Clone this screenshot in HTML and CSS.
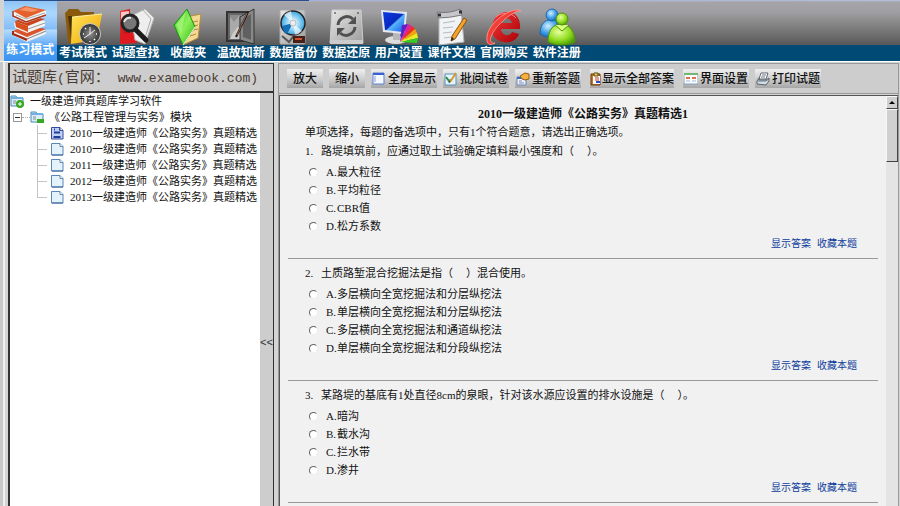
FILE: index.html
```html
<!DOCTYPE html>
<html lang="zh-CN">
<head>
<meta charset="utf-8">
<title>一级建造师真题库学习软件</title>
<link rel="stylesheet" href="styles.css">
</head>
<body>
<svg class="defs" aria-hidden="true">
  <defs>
    <linearGradient id="folder" x1="0" y1="0" x2="1" y2="1"><stop offset="0" stop-color="#ffe45a"/><stop offset="1" stop-color="#f0a400"/></linearGradient>
    <linearGradient id="red" x1="0" y1="0" x2="1" y2="1"><stop offset="0" stop-color="#f43a38"/><stop offset="1" stop-color="#a80008"/></linearGradient>
    <linearGradient id="green" x1="0" y1="0" x2="1" y2="1"><stop offset="0" stop-color="#30c818"/><stop offset=".5" stop-color="#8cf05a"/><stop offset="1" stop-color="#28b010"/></linearGradient>
    <linearGradient id="silver" x1="0" y1="0" x2="1" y2="1"><stop offset="0" stop-color="#e8e8e8"/><stop offset="1" stop-color="#9c9c9c"/></linearGradient>
    <linearGradient id="screen" x1="0" y1="0" x2="1" y2="1"><stop offset="0" stop-color="#0a3ce0"/><stop offset=".5" stop-color="#0a28c0"/><stop offset=".55" stop-color="#58b4ff"/><stop offset="1" stop-color="#1058e0"/></linearGradient>
    <radialGradient id="disc"><stop offset="0" stop-color="#fff"/><stop offset=".25" stop-color="#d0f0ff"/><stop offset="1" stop-color="#38a4e0"/></radialGradient>
    <radialGradient id="lime" cx=".4" cy=".35" r=".7"><stop offset="0" stop-color="#eaffa0"/><stop offset=".6" stop-color="#90dc20"/><stop offset="1" stop-color="#4c9a08"/></radialGradient>
    <radialGradient id="sky" cx=".4" cy=".35" r=".7"><stop offset="0" stop-color="#d0f0ff"/><stop offset=".6" stop-color="#3c9ce8"/><stop offset="1" stop-color="#1460b0"/></radialGradient>
    <radialGradient id="clock"><stop offset="0" stop-color="#909090"/><stop offset="1" stop-color="#303030"/></radialGradient>
    <symbol id="doc" viewBox="0 0 14 14"><path d="M1.500 1.500h8.500l3 3v8.500h-11.500z" fill="#e4f2fc" stroke="#5a86b8"/><path d="M10 1.500v3h3" fill="#fff" stroke="#5a86b8"/><path d="M2 13h11" stroke="#37649c"/></symbol>
    <symbol id="doc-open" viewBox="0 0 14 14"><path d="M1.500 1.500h8.500l3 3v8.500h-11.500z" fill="#c0d0f4" stroke="#344c9c"/><path d="M10 1.500v3h3" fill="#fff" stroke="#344c9c"/><path d="M4 3.500h1M9 3.500h1M4 6.500h6M3.500 11h7" stroke="#243c98" stroke-width="2"/></symbol>
  </defs>
</svg>

<header class="topbar">
  <nav class="modes" aria-label="主功能">
    <button class="mode active" type="button">
      <svg viewBox="0 0 40 38"><path d="M3 27l13-6 20 4v4l-19 8L4 31z" fill="#eee"/><path d="M3 26l13-6 20 4-19 8z" fill="#d9532c"/><path d="M4 29l13 5 19-8" stroke="#888" fill="none"/><path d="M3 26v3l14 6" stroke="#a52a10" stroke-width="2" fill="none"/><path d="M4 18l13-5 18 3v5l-18 7L5 23z" fill="#f4f4f4"/><path d="M5 16l13-5 17 3-17 7z" fill="#c9441c"/><path d="M6 20l12 4 17-6" stroke="#999" fill="none"/><path d="M5 16l13 5v6L6 22z" fill="#d8501e"/><path d="M3 7l12-5 21 4v5l-20 7-12-5z" fill="#f6f6f6"/><path d="M3 6l12-5 21 4-20 8z" fill="#e4602c"/><path d="M9 5l7-3 13 3-7 2z" fill="#f49468"/><path d="M3 6v5l13 6 20-7" stroke="#a8381c" fill="none" stroke-width="1.500"/><path d="M6 10l10 4 19-6" stroke="#aaa" fill="none"/></svg>
      <span>练习模式</span>
    </button>
    <button class="mode" type="button">
      <svg viewBox="0 0 40 38"><path d="M2 5l4-4h9l3 3h13v5L8 35 5 34z" fill="#8a5a0c"/><path d="M5 8h23v7L8 30z" fill="#4a3208"/><path d="M9 9l30-3-5 26-26 4z" fill="url(#folder)"/><path d="M9 9l30-3" stroke="#fff0a0"/><circle cx="27" cy="26" r="10.500" fill="url(#clock)" stroke="#ccc"/><path d="M27 19v7l5-4M27 26l-6 4" stroke="#eee" fill="none"/><path d="M20 26h1M33 26h1M27 34v-1M22 20l1 1M31 31l1 1" stroke="#fff" stroke-width="1.500"/></svg>
      <span>考试模式</span>
    </button>
    <button class="mode" type="button">
      <svg viewBox="0 0 40 38"><path d="M4 3l10-2v33l-10 1z" fill="url(#red)"/><path d="M6 26l13-2 2 11-17 1z" fill="#e01820"/><path d="M15 8l14-7 9 9-9 26-10-4z" fill="#eee" stroke="#b8b8b8"/><path d="M27 2l8 9-7 22" stroke="#aaa" fill="none"/><path d="M5 4l8-1v8l-8 5z" fill="#f8c8c8"/><circle cx="14" cy="15" r="8" fill="#777" stroke="#242424" stroke-width="3"/><path d="M8 14q2-5 7-4" stroke="#e8e8e8" stroke-width="2" fill="none"/><path d="M20 22l10 10" stroke="#1c1c1c" stroke-width="5" stroke-linecap="round"/></svg>
      <span>试题查找</span>
    </button>
    <button class="mode" type="button">
      <svg viewBox="0 0 40 38"><path d="M18 9l15-3-3 24-15 7z" fill="#f4d894" stroke="#b88c3c"/><path d="M25 14l5-1M25 18l5-1M25 22l5-1M22 28l6-2" stroke="#b8863c"/><path d="M19 1l8 18-12 18L6 17z" fill="url(#green)" stroke="#189410"/><path d="M18 3L8 17l5 8z" fill="#b8f890" opacity=".6"/><path d="M27 19L15 37" stroke="#f0ffe0"/></svg>
      <span>收藏夹</span>
    </button>
    <button class="mode" type="button">
      <svg viewBox="0 0 40 38"><path d="M6 4h22v29H6z" fill="#666" stroke="#333" stroke-width="2"/><path d="M9 7h12v24H9z" fill="#8c8c8c"/><path d="M9 31l6-15 6 7v8z" fill="#ccc"/><path d="M9 9l4 5 5-6v9l-9 12z" fill="#aaa"/><path d="M19 9L33 1v35l-14-4z" fill="#888" stroke="#333"/><path d="M22 11l8-5v26l-8-3z" fill="#606060"/><path d="M27 4L15 29" stroke="#241410" stroke-width="2"/><path d="M26 5L16 27" stroke="#b48474" stroke-width=".8"/></svg>
      <span>温故知新</span>
    </button>
    <button class="mode" type="button">
      <svg viewBox="0 0 40 38"><rect x="7" y="2" width="25" height="34" rx="1" fill="url(#silver)" stroke="#aaa"/><circle cx="20" cy="15" r="12" fill="url(#disc)" stroke="#222" stroke-width="1.500"/><path d="M20 15L11 7a12 12 0 0 1 7-4zM20 15l9 8a12 12 0 0 1-7 4z" fill="#fff" opacity=".65"/><path d="M20 15l-11 3a12 12 0 0 0 5 8z" fill="#1270b8"/><circle cx="20" cy="15" r="3" fill="#eee" stroke="#bbb"/><path d="M9 28l7 6 6-8" stroke="#555" stroke-width="2" fill="none"/><rect x="20" y="28" width="12" height="7" fill="#462018"/><path d="M22 31h7" stroke="#c8542c" stroke-width="2"/></svg>
      <span>数据备份</span>
    </button>
    <button class="mode" type="button">
      <svg viewBox="0 0 40 38"><path d="M6 2h29l2 33H4z" fill="url(#silver)" stroke="#ccc"/><circle cx="9" cy="5" r="1" fill="#666"/><circle cx="32" cy="5" r="1" fill="#666"/><path d="M4 32h33v4H4z" fill="#ccc"/><path d="M12 17a9 9 0 0 1 15-6M29 19a9 9 0 0 1-15 6" stroke="#505050" stroke-width="3" fill="none"/><path d="M30 8v8h-8zM11 28v-8h8z" fill="#505050"/></svg>
      <span>数据还原</span>
    </button>
    <button class="mode" type="button">
      <svg viewBox="0 0 40 38"><ellipse cx="17" cy="32" rx="11" ry="4" fill="#ddd"/><path d="M14 24h7v8h-7z" fill="#b8b8b8"/><path d="M2 2l26 2-2 22L4 24z" fill="#e4e8f0"/><path d="M4 4l22 2-2 18-18-2z" fill="url(#screen)"/><path d="M21 34l2-17 6-1z" fill="#6020c8"/><path d="M21 34l8-18 4 2z" fill="#e020a0"/><path d="M21 34L33 18l3 3z" fill="#f03020"/><path d="M21 34l15-13 2 4z" fill="#f8a010"/><path d="M21 34l17-9 1 5z" fill="#e8ec20"/><path d="M21 34l18-4-1 5z" fill="#38c828"/></svg>
      <span>用户设置</span>
    </button>
    <button class="mode" type="button">
      <svg viewBox="0 0 40 38"><path d="M8 6l22-3 3 31-25 3z" fill="#f0f2f4" stroke="#b0b4b8"/><path d="M6 4q12 2 23-3l2 6Q18 10 7 10z" fill="#c8c8cc" stroke="#777"/><path d="M7 7h3M28 4h3" stroke="#333" stroke-width="3"/><path d="M12 15l12-2M12 20l10-1M12 25l9-1M13 30l8-1" stroke="#b4bcc4"/><path d="M33 10l3 2-12 19-4 2 1-5z" fill="#f0a428" stroke="#905010"/><path d="M20 33l1-4 2 2z" fill="#222"/></svg>
      <span>课件文档</span>
    </button>
    <button class="mode" type="button">
      <svg viewBox="0 0 40 38"><path d="M35 26c-3 7-9 9-15 8C11 33 7 27 8 19 9 10 15 4 23 4c9 0 14 7 13 17H17c1 7 8 8 11 3z" fill="url(#red)"/><path d="M17 15h11c-1-6-10-6-11 0z" fill="#777"/><path d="M12 9c5-5 15-5 20 1" stroke="#ff8a80" fill="none"/><path d="M37 3C28-2 5 14 3 28c-1 9 3 10 8 7-8 1-4-9 2-16C22 9 32 2 37 3z" fill="#f04038" stroke="#ffa098" stroke-width=".8"/></svg>
      <span>官网购买</span>
    </button>
    <button class="mode" type="button">
      <svg viewBox="0 0 40 38"><path d="M3 26c0-9 4-13 8-14h8l4 16c-6 2-14 2-20-2z" fill="url(#sky)" stroke="#1c68a8"/><circle cx="15" cy="7" r="6" fill="url(#sky)" stroke="#1c68a8"/><path d="M11 34c0-11 4-16 9-17h9c5 2 9 8 9 17-7 4-20 4-27 0z" fill="url(#lime)" stroke="#509408"/><path d="M18 17l7 6 7-6" fill="#d8ff80" stroke="#509408"/><circle cx="25" cy="11" r="6" fill="url(#lime)" stroke="#509408"/></svg>
      <span>软件注册</span>
    </button>
  </nav>
</header>

<div class="workspace">
  <aside class="sidebar">
    <h1 class="site">试题库<span class="latin">(</span>官网：<span class="latin"> www.examebook.com)</span></h1>
    <div class="side-body">
      <div class="tree">
        <div class="node root">
          <svg class="node-icon" viewBox="0 0 14 14"><path d="M1 2h5l1 2h6v8H1z" fill="#dceefc" stroke="#4888b8"/><path d="M1 4h12" stroke="#70b0e0" stroke-width="2"/><path d="M3 7h3M3 9h3" stroke="#888"/><circle cx="10" cy="10" r="4" fill="#38a820"/><path d="M10 8v4M8 10h4" stroke="#fff"/></svg>
          <span>一级建造师真题库学习软件</span>
        </div>
        <div class="node module">
          <button class="toggle" type="button" aria-label="折叠"></button><i class="dash"></i>
          <svg class="node-icon" viewBox="0 0 14 14"><path d="M1 2h5l1 2h6v8H1z" fill="#dceefc" stroke="#4888b8"/><path d="M1 4h12" stroke="#70b0e0" stroke-width="2"/><path d="M3 7h3M3 9h3" stroke="#888"/><path d="M7 9h7v4H7z" fill="#38a820"/></svg>
          <span>《公路工程管理与实务》模块</span>
        </div>
        <ul class="leaves">
          <li class="node"><svg class="node-icon"><use href="#doc-open"/></svg><span>2010一级建造师《公路实务》真题精选</span></li>
          <li class="node"><svg class="node-icon"><use href="#doc"/></svg><span>2010一级建造师《公路实务》真题精选</span></li>
          <li class="node"><svg class="node-icon"><use href="#doc"/></svg><span>2011一级建造师《公路实务》真题精选</span></li>
          <li class="node"><svg class="node-icon"><use href="#doc"/></svg><span>2012一级建造师《公路实务》真题精选</span></li>
          <li class="node"><svg class="node-icon"><use href="#doc"/></svg><span>2013一级建造师《公路实务》真题精选</span></li>
        </ul>
      </div>
      <button class="collapse" type="button">&lt;&lt;</button>
    </div>
  </aside>

  <main class="main">
    <div class="toolbar">
      <button class="tool" type="button">放大</button>
      <button class="tool" type="button">缩小</button>
      <button class="tool with-icon" type="button"><svg viewBox="0 0 14 14"><path d="M1 1h11v11H1z" fill="#f4f8ff" stroke="#6080d0"/><path d="M1 2h11" stroke="#3c60d0" stroke-width="2"/><path d="M2 5h2M2 7h2M2 9h2" stroke="#88a0e0"/></svg>全屏显示</button>
      <button class="tool with-icon" type="button"><svg viewBox="0 0 14 14"><path d="M1 2h11v11H1z" fill="#e4f4fc" stroke="#5890b8"/><path d="M2 5l3 4 2-1" stroke="#308850" stroke-width="2" fill="none"/><path d="M12 1L6 10" stroke="#d89828" stroke-width="2"/><path d="M6 9l-1 2" stroke="#333"/></svg>批阅试卷</button>
      <button class="tool with-icon" type="button"><svg viewBox="0 0 14 14"><path d="M1 5h9v8H1z" fill="#eef4ff" stroke="#6888b8"/><path d="M1 6h9" stroke="#3c70c8" stroke-width="2"/><path d="M4 4l5-3 4 1v5l-4 1-3-1z" fill="#f4b040" stroke="#985c10"/><path d="M3 9h3M3 11h5" stroke="#88a"/></svg>重新答题</button>
      <button class="tool flush" type="button"><svg viewBox="0 0 12 14"><path d="M1 2h9v11H1z" fill="#c87820" stroke="#6c3808"/><path d="M3 4h7v8H3z" fill="#fff"/><path d="M4 1h4v3H4z" fill="#d8d060" stroke="#605010"/><path d="M5 6h4M5 8h4" stroke="#d83030"/><path d="M6 10h4" stroke="#2850c0" stroke-width="2"/></svg>显示全部答案</button>
      <button class="tool with-icon" type="button"><svg viewBox="0 0 14 14"><path d="M0 2h14v10H0z" fill="#fafcff" stroke="#80a0c0"/><path d="M0 2h14" stroke="#70b870" stroke-width="2"/><path d="M2 6h4M8 6h4" stroke="#e07048" stroke-width="2"/><path d="M2 9h4M8 9h4" stroke="#a0b8e0"/></svg>界面设置</button>
      <button class="tool with-icon" type="button"><svg viewBox="0 0 14 14"><path d="M5 1h7l-2 6H3z" fill="#fff" stroke="#667"/><path d="M3 6l-2 3v3l9 1 3-4V6l-3 2H3z" fill="#d4dce4" stroke="#566"/><path d="M2 9h8l3-2M6 3h4M5 5h4" stroke="#678" fill="none"/></svg>打印试题</button>
    </div>

    <div class="viewport">
      <form class="paper">
        <h2>2010一级建造师《公路实务》真题精选1</h2>
        <p class="intro">单项选择，每题的备选项中，只有1个符合题意，请选出正确选项。</p>

        <fieldset class="question">
          <legend><span class="num">1.</span>路堤填筑前，应通过取土试验确定填料最小强度和（<span class="blank"></span>）。</legend>
          <label><input type="radio" name="q1"><span class="key">A.</span>最大粒径</label>
          <label><input type="radio" name="q1"><span class="key">B.</span>平均粒径</label>
          <label><input type="radio" name="q1"><span class="key">C.</span>CBR值</label>
          <label><input type="radio" name="q1"><span class="key">D.</span>松方系数</label>
          <div class="actions"><a href="#">显示答案</a><a href="#">收藏本题</a></div>
        </fieldset>

        <fieldset class="question">
          <legend><span class="num">2.</span>土质路堑混合挖掘法是指（<span class="blank"></span>）混合使用。</legend>
          <label><input type="radio" name="q2"><span class="key">A.</span>多层横向全宽挖掘法和分层纵挖法</label>
          <label><input type="radio" name="q2"><span class="key">B.</span>单层横向全宽挖掘法和分层纵挖法</label>
          <label><input type="radio" name="q2"><span class="key">C.</span>多层横向全宽挖掘法和通道纵挖法</label>
          <label><input type="radio" name="q2"><span class="key">D.</span>单层横向全宽挖掘法和分段纵挖法</label>
          <div class="actions"><a href="#">显示答案</a><a href="#">收藏本题</a></div>
        </fieldset>

        <fieldset class="question">
          <legend><span class="num">3.</span>某路堤的基底有1处直径8cm的泉眼，针对该水源应设置的排水设施是（<span class="blank"></span>）。</legend>
          <label><input type="radio" name="q3"><span class="key">A.</span>暗沟</label>
          <label><input type="radio" name="q3"><span class="key">B.</span>截水沟</label>
          <label><input type="radio" name="q3"><span class="key">C.</span>拦水带</label>
          <label><input type="radio" name="q3"><span class="key">D.</span>渗井</label>
          <div class="actions"><a href="#">显示答案</a><a href="#">收藏本题</a></div>
        </fieldset>
      </form>
      <div class="scrollbar" aria-hidden="true">
        <div class="scroll-up"></div>
        <div class="scroll-thumb"></div>
      </div>
    </div>
  </main>
</div>
</body>
</html>
```

FILE: styles.css
```css
* {
  box-sizing: border-box;
}

body {
  margin: 0;
  height: 100vh;
  display: flex;
  flex-direction: column;
  overflow: hidden;
  background: #e6e6e6;
  color: #111;
  font: 11px/16px "Liberation Serif", "Noto Sans CJK SC", serif;
}

button {
  margin: 0;
  padding: 0;
  border: 0;
  background: none;
  color: inherit;
  font: inherit;
}

h1, h2, p, ul {
  margin: 0;
  padding: 0;
}

.defs {
  position: absolute;
  width: 0;
  height: 0;
}

/* Top bar */
.topbar {
  flex: none;
  height: 61px;
  border-left: 4px solid #d4d4d4;
  background:
    linear-gradient(90deg, #2a4c8c 34%, #a4b0dc 34%, #b0bcd8) 0 0 / 100% 1px no-repeat,
    linear-gradient(#c4c4cc 0, #a4a4a9 2px, #a0a0a4 12px, #8a8a8a 22px, #585858 45px, #004a75 45px);
}

.modes {
  display: grid;
  grid-template-columns: repeat(11, 1fr);
  max-width: 579px;
  height: 61px;
  padding-top: 1px;
}

.mode {
  display: flex;
  flex-direction: column;
  align-items: center;
  padding-top: 7px;
  color: #fff;
  font-size: 12px;
  font-weight: bold;
  line-height: 14px;
  white-space: nowrap;
}

.mode svg {
  width: 40px;
  height: 38px;
  flex: none;
}

.mode.active {
  padding-top: 4px;
  background: linear-gradient(#8cc4f4, #acd8ff 12px, #84bcf8 28px, #b4dcff 29px, #6cb0f8 43px, #50a4f8 44px, #3c94f0);
}

/* Two panes */
.workspace {
  flex: 1;
  min-height: 0;
  display: flex;
  gap: 4px;
  padding: 1px 1px 0 8px;
  border-top: 1px solid #fff;
  background: linear-gradient(90deg, #c8c8c8 3px, #f0f0f0 3px, #f0f0f0 5px, #d4d4d4 5px);
}

.sidebar {
  flex: none;
  width: 266px;
  display: flex;
  flex-direction: column;
  border: solid #333;
  border-width: 1px 1px 0 2px;
}

.site {
  flex: none;
  height: 29px;
  padding-left: 2px;
  border-bottom: 2px solid #333;
  background: #cdcdcd;
  color: #4a3c34;
  font-size: 15px;
  font-weight: normal;
  line-height: 27px;
  white-space: pre;
}

.site .latin {
  font-family: "Liberation Mono", monospace;
  font-size: 13px;
}

.side-body {
  flex: 1;
  min-height: 0;
  display: flex;
  background: #cdcdcd;
}

.tree {
  flex: 1;
  min-width: 0;
  overflow: hidden;
  background: #fff;
}

.collapse {
  flex: none;
  width: 13px;
  padding-top: 84px;
  font-family: "Liberation Sans", sans-serif;
  color: #333;
}

.node {
  display: flex;
  align-items: center;
  height: 16px;
  white-space: nowrap;
}

.node-icon {
  flex: none;
  width: 14px;
  height: 14px;
}

.root {
  gap: 6px;
}

.module {
  padding-left: 3px;
}

.module .node-icon {
  margin-right: 5px;
}

.toggle {
  flex: none;
  width: 9px;
  height: 9px;
  border: 1px solid #999;
  background: linear-gradient(#333, #333) center / 5px 1px no-repeat #fff;
}

.dash {
  width: 8px;
  border-top: 1px dotted #aaa;
}

.leaves {
  margin-left: 27px;
  list-style: none;
}

.leaves .node {
  gap: 6px;
  background:
    linear-gradient(#c4c4c4, #c4c4c4) 0 0 / 1px 100% no-repeat,
    linear-gradient(#c4c4c4, #c4c4c4) 0 8px / 10px 1px no-repeat;
  padding-left: 13px;
}

.leaves .node:last-child {
  background:
    linear-gradient(#c4c4c4, #c4c4c4) 0 0 / 1px 8px no-repeat,
    linear-gradient(#c4c4c4, #c4c4c4) 0 8px / 10px 1px no-repeat;
}

/* Main pane */
.main {
  flex: 1;
  min-width: 0;
  display: flex;
  flex-direction: column;
  border: solid #999;
  border-width: 1px 1px 0 1px;
}

.toolbar {
  flex: none;
  display: flex;
  align-items: center;
  gap: 6px;
  height: 30px;
  padding-left: 8px;
  border-bottom: 1px solid #999;
  background: #cdcdcd;
}

.tool {
  display: flex;
  align-items: center;
  justify-content: center;
  height: 19px;
  padding: 0 6px;
  background: linear-gradient(#f0f0f0, #cfcfcf 50%, #a6a6a6);
  font-size: 12px;
  font-weight: 500;
  white-space: nowrap;
}

.tool svg {
  flex: none;
  width: 14px;
  height: 14px;
}

.with-icon {
  gap: 2px;
  padding: 0 1px;
}

.flush {
  margin: 0 3px;
  padding: 0;
}

.flush svg {
  width: 12px;
}

.viewport {
  flex: 1;
  min-height: 0;
  display: flex;
  margin-top: 1px;
  border: solid #555;
  border-width: 1px 0 0 1px;
  background: #f1f1f1;
}

.paper {
  flex: 1;
  min-width: 0;
  padding: 9px 8px 0;
  line-height: 18px;
}

.paper h2 {
  font-size: 12px;
  line-height: 18px;
  text-align: center;
}

.intro {
  padding-left: 17px;
}

.question {
  margin: 0;
  padding: 5px 0 5px 17px;
  border: 0;
  border-bottom: 1px solid #999;
}

.intro + .question {
  padding-top: 1px;
}

.question legend {
  float: left;
  width: 100%;
  margin-bottom: 3px;
  padding: 0;
}

.question label {
  clear: both;
  display: flex;
  align-items: center;
  height: 18px;
  padding-left: 4px;
}

.num {
  display: inline-block;
  width: 16px;
}

.key {
  width: 11px;
}

.blank {
  display: inline-block;
  width: 13px;
}

.question input {
  appearance: none;
  flex: none;
  width: 9px;
  height: 9px;
  margin: 0 8px 0 0;
  border: 1px solid;
  border-color: #666 #eee #eee #666;
  border-radius: 50%;
  background: #fff;
}

.actions {
  display: flex;
  justify-content: flex-end;
  gap: 6px;
  padding-right: 21px;
  font-size: 10px;
}

.actions a {
  color: #0b3b9c;
  text-decoration: none;
}

/* Scroll bar */
.scrollbar {
  flex: none;
  width: 12px;
  background: #e4e4e4;
}

.scroll-up,
.scroll-thumb {
  border: 1px solid;
  border-color: #f8f8f8 #444 #444 #f8f8f8;
  background: #d0d0d0;
}

.scroll-up {
  display: flex;
  align-items: center;
  justify-content: center;
  height: 13px;
}

.scroll-up::before {
  content: "";
  border: 3px solid transparent;
  border-top: 0;
  border-bottom-color: #000;
}

.scroll-thumb {
  height: 53px;
}
```
